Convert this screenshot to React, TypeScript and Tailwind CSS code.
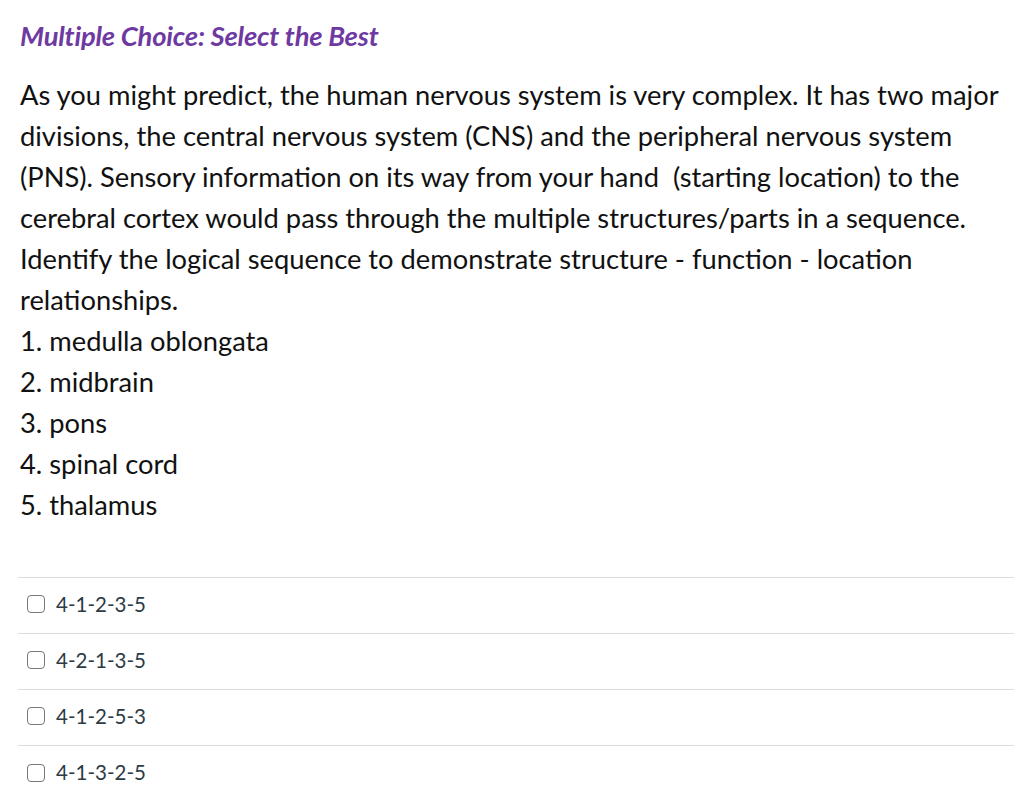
const options = ['4-1-2-3-5', '4-2-1-3-5', '4-1-2-5-3', '4-1-3-2-5'];

const parts = ['1. medulla oblongata', '2. midbrain', '3. pons', '4. spinal cord', '5. thalamus'];

export default function App() {
  return (
    <div className="min-h-[800px] bg-white font-['Lato',sans-serif] pl-5 pr-[10px] pt-[18px]">
      <h2 className="text-[27.4px] font-bold italic leading-9 tracking-[-0.2px] text-[#6e3aa2]">
        Multiple Choice: Select the Best
      </h2>

      <div className="mt-[20px] text-[27.3px] leading-[41px] text-[#111]">
        <p>
          As you might predict, the human nervous system is very complex. It has two major
          divisions, the central nervous system (CNS) and the peripheral nervous system
          (PNS). Sensory information on its way from your hand&nbsp; (starting location) to the
          cerebral cortex would pass through the multiple structures/parts in a sequence.
          Identify the logical sequence to demonstrate structure - function - location
          relationships.
        </p>
        {parts.map((part) => (
          <p key={part}>{part}</p>
        ))}
      </div>

      <div className="mt-[52px] -ml-[2px] w-[996px] border-t border-[#dadada]">
        {options.map((option) => (
          <label
            key={option}
            className="flex h-[56px] items-center gap-[11px] border-b border-[#dadada] pb-[3px] pl-[9px] last:border-b-0"
          >
            <span className="h-[18px] w-[18px] rounded-[4px] border border-[#777] bg-white" />
            <span className="text-[20.5px] text-[#2d3b45]">{option}</span>
          </label>
        ))}
      </div>
    </div>
  );
}
